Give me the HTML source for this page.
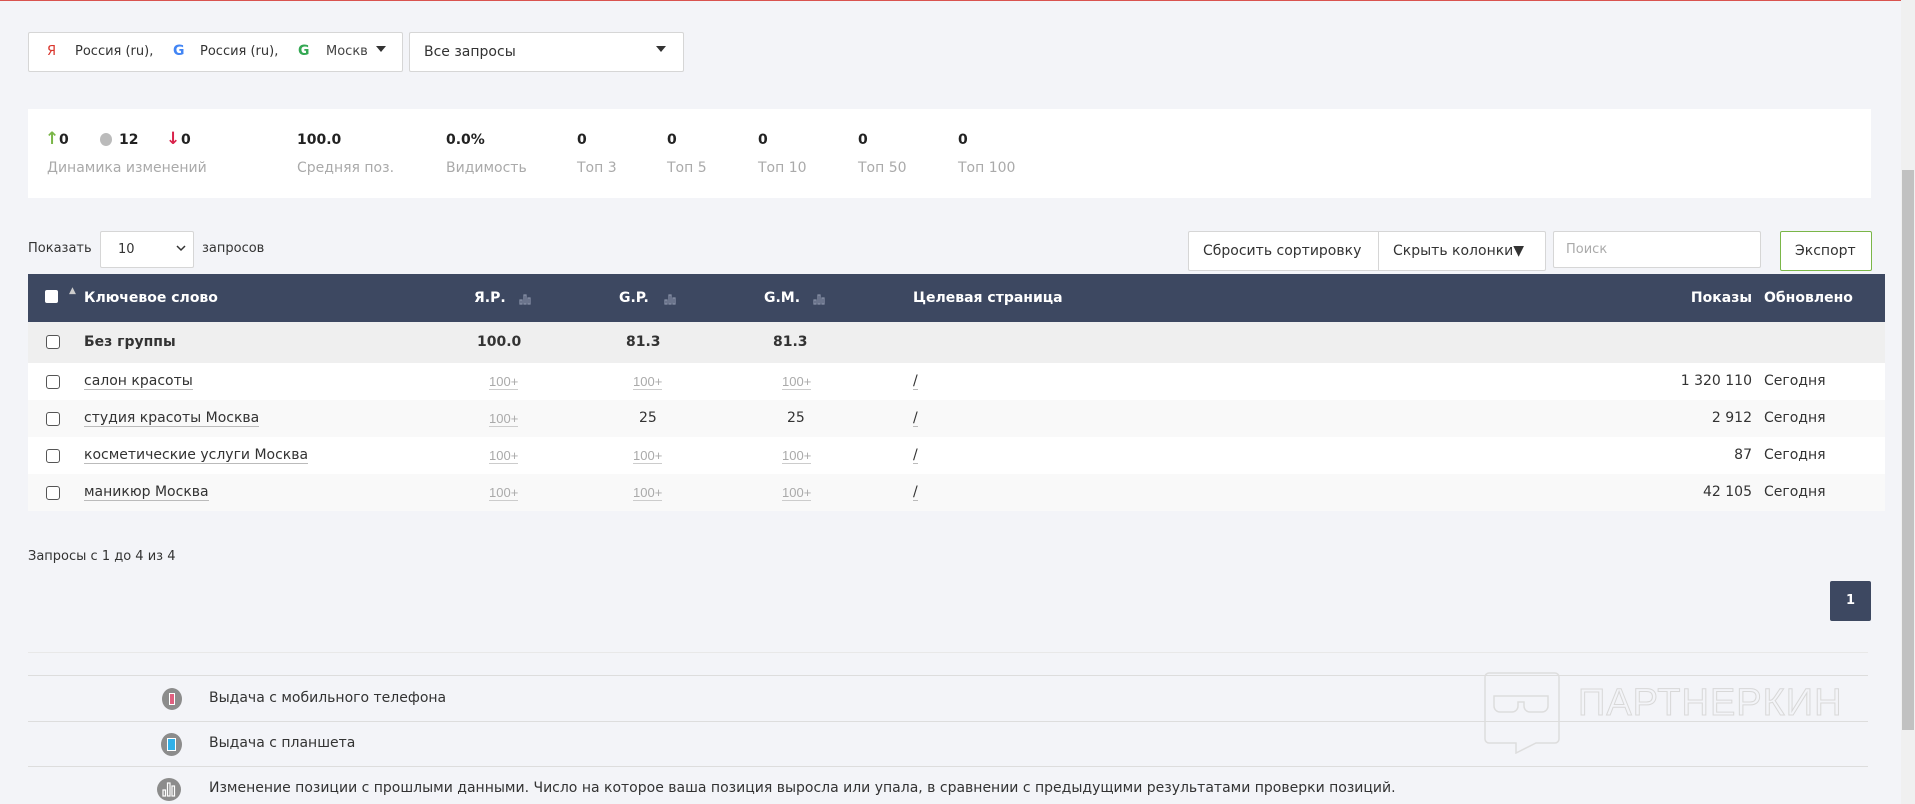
<!DOCTYPE html>
<html><head><meta charset="utf-8"><style>
*{box-sizing:border-box;margin:0;padding:0}
body{width:1915px;height:804px;background:#f3f4f8;font-family:"DejaVu Sans","Liberation Sans",sans-serif;font-size:14px;color:#333;position:relative;overflow:hidden}
.a{position:absolute;white-space:nowrap}
.box{position:absolute;background:#fff;border:1px solid #d6d6d6;border-radius:2px}
.tri{display:inline-block;width:0;height:0;border-left:5px solid transparent;border-right:5px solid transparent;border-top:6px solid #333;vertical-align:middle}
.lbl{color:#aaa;font-size:14px}
.num{font-weight:bold;font-size:14px;color:#222}
.row{position:absolute;left:28px;width:1857px}
.cb{position:absolute;left:18px;width:14px;height:14px;border:1px solid #555;border-radius:3px;background:#fff}
.gray{color:#aaa;border-bottom:1px solid #ccc;font-size:13px;font-family:"Liberation Sans",sans-serif}
.kw{border-bottom:1px solid #bbb}
.hr{position:absolute;left:28px;width:1840px;height:1px;background:#ddd}
</style></head><body>
<div class="a" style="left:0;top:0;width:1915px;height:1px;background:#d9534f"></div>
<div class="box" style="left:28px;top:32px;width:375px;height:40px"></div>
<div class="a" style="left:47px;top:44px;color:#d9342b;font-size:13px">Я</div>
<div class="a" style="left:75px;top:44px;font-size:13px">Россия (ru),</div>
<div class="a" style="left:173px;top:43px;color:#4285f4;font-weight:bold">G</div>
<div class="a" style="left:200px;top:44px;font-size:13px">Россия (ru),</div>
<div class="a" style="left:298px;top:43px;color:#34a853;font-weight:bold">G</div>
<div class="a" style="left:326px;top:44px;color:#444;font-size:13px">Москв</div>
<div class="a" style="left:376px;top:41px"><span class="tri"></span></div>
<div class="box" style="left:409px;top:32px;width:275px;height:40px"></div>
<div class="a" style="left:424px;top:44px">Все запросы</div>
<div class="a" style="left:656px;top:41px"><span class="tri"></span></div>

<div class="a" style="left:28px;top:109px;width:1843px;height:89px;background:#fff"></div>
<div class="a" style="left:45px;top:129px;color:#7ab648;font-weight:bold;font-size:17px">↑</div>
<div class="a num" style="left:59px;top:132px">0</div>
<div class="a" style="left:100px;top:133px;width:12px;height:13px;border-radius:50%;background:#bbb"></div>
<div class="a num" style="left:119px;top:132px">12</div>
<div class="a" style="left:166px;top:129px;color:#d9234b;font-weight:bold;font-size:17px">↓</div>
<div class="a num" style="left:181px;top:132px">0</div>
<div class="a lbl" style="left:47px;top:160px">Динамика изменений</div>
<div class="a num" style="left:297px;top:132px">100.0</div><div class="a lbl" style="left:297px;top:160px">Средняя поз.</div>
<div class="a num" style="left:446px;top:132px">0.0%</div><div class="a lbl" style="left:446px;top:160px">Видимость</div>
<div class="a num" style="left:577px;top:132px">0</div><div class="a lbl" style="left:577px;top:160px">Топ 3</div>
<div class="a num" style="left:667px;top:132px">0</div><div class="a lbl" style="left:667px;top:160px">Топ 5</div>
<div class="a num" style="left:758px;top:132px">0</div><div class="a lbl" style="left:758px;top:160px">Топ 10</div>
<div class="a num" style="left:858px;top:132px">0</div><div class="a lbl" style="left:858px;top:160px">Топ 50</div>
<div class="a num" style="left:958px;top:132px">0</div><div class="a lbl" style="left:958px;top:160px">Топ 100</div>

<div class="a" style="left:28px;top:241px;font-size:13px">Показать</div>
<div class="box" style="left:100px;top:231px;width:94px;height:37px"></div>
<div class="a" style="left:118px;top:242px;font-size:13px">10</div>
<svg class="a" style="left:176px;top:245px" width="10" height="7"><path d="M1 1l4 4 4-4" fill="none" stroke="#333" stroke-width="1.5"/></svg>
<div class="a" style="left:202px;top:241px;font-size:13px">запросов</div>
<div class="box" style="left:1188px;top:231px;width:358px;height:40px"></div>
<div class="a" style="left:1378px;top:232px;width:1px;height:38px;background:#d6d6d6"></div>
<div class="a" style="left:1203px;top:243px;font-size:14px">Сбросить сортировку</div>
<div class="a" style="left:1393px;top:243px;font-size:14px">Скрыть колонки▼</div>
<div class="box" style="left:1553px;top:231px;width:208px;height:37px"></div>
<div class="a" style="left:1566px;top:242px;color:#aaa;font-size:13px">Поиск</div>
<div class="box" style="left:1780px;top:231px;width:92px;height:40px;border-color:#7ab648"></div>
<div class="a" style="left:1795px;top:243px">Экспорт</div>

<div class="row" style="top:274px;height:48px;background:#3d4861;color:#fff;font-weight:bold">
<div class="a" style="left:17px;top:16px;width:13px;height:13px;background:#fff;border-radius:2px"></div>
<div class="a" style="left:41px;top:12px;font-size:9px;color:#ccc">▲</div>
<div class="a" style="left:56px;top:16px">Ключевое слово</div>
<div class="a" style="left:446px;top:16px">Я.Р.</div><svg class="a" style="left:491px;top:19px" width="12" height="12"><g fill="none" stroke="#8a93a8" stroke-width="1.2"><rect x="1" y="7" width="2" height="4"/><rect x="5" y="2" width="2" height="9"/><rect x="9" y="5" width="2" height="6"/></g></svg>
<div class="a" style="left:591px;top:16px">G.P.</div><svg class="a" style="left:636px;top:19px" width="12" height="12"><g fill="none" stroke="#8a93a8" stroke-width="1.2"><rect x="1" y="7" width="2" height="4"/><rect x="5" y="2" width="2" height="9"/><rect x="9" y="5" width="2" height="6"/></g></svg>
<div class="a" style="left:736px;top:16px">G.M.</div><svg class="a" style="left:785px;top:19px" width="12" height="12"><g fill="none" stroke="#8a93a8" stroke-width="1.2"><rect x="1" y="7" width="2" height="4"/><rect x="5" y="2" width="2" height="9"/><rect x="9" y="5" width="2" height="6"/></g></svg>
<div class="a" style="left:885px;top:16px">Целевая страница</div>
<div class="a" style="left:1600px;top:16px;width:124px;text-align:right">Показы</div>
<div class="a" style="left:1736px;top:16px">Обновлено</div>
</div>
<div class="row" style="top:322px;height:41px;background:#efefef;font-weight:bold">
<div class="cb" style="top:13px"></div>
<div class="a" style="left:56px;top:12px">Без группы</div>
<div class="a" style="left:449px;top:12px">100.0</div>
<div class="a" style="left:598px;top:12px">81.3</div>
<div class="a" style="left:745px;top:12px">81.3</div>
</div>
<div class="row" style="top:363px;height:37px;background:#fff">
<div class="cb" style="top:12px"></div><div class="a kw" style="left:56px;top:10px">салон красоты</div>
<div class="a gray" style="left:461px;top:11px">100+</div><div class="a gray" style="left:605px;top:11px">100+</div><div class="a gray" style="left:754px;top:11px">100+</div>
<div class="a kw" style="left:885px;top:10px">/</div>
<div class="a" style="left:1600px;top:10px;width:124px;text-align:right">1 320 110</div><div class="a" style="left:1736px;top:10px">Сегодня</div>
</div>
<div class="row" style="top:400px;height:37px;background:#f9f9f9">
<div class="cb" style="top:12px"></div><div class="a kw" style="left:56px;top:10px">студия красоты Москва</div>
<div class="a gray" style="left:461px;top:11px">100+</div><div class="a" style="left:611px;top:10px">25</div><div class="a" style="left:759px;top:10px">25</div>
<div class="a kw" style="left:885px;top:10px">/</div>
<div class="a" style="left:1600px;top:10px;width:124px;text-align:right">2 912</div><div class="a" style="left:1736px;top:10px">Сегодня</div>
</div>
<div class="row" style="top:437px;height:37px;background:#fff">
<div class="cb" style="top:12px"></div><div class="a kw" style="left:56px;top:10px">косметические услуги Москва</div>
<div class="a gray" style="left:461px;top:11px">100+</div><div class="a gray" style="left:605px;top:11px">100+</div><div class="a gray" style="left:754px;top:11px">100+</div>
<div class="a kw" style="left:885px;top:10px">/</div>
<div class="a" style="left:1600px;top:10px;width:124px;text-align:right">87</div><div class="a" style="left:1736px;top:10px">Сегодня</div>
</div>
<div class="row" style="top:474px;height:37px;background:#f9f9f9">
<div class="cb" style="top:12px"></div><div class="a kw" style="left:56px;top:10px">маникюр Москва</div>
<div class="a gray" style="left:461px;top:11px">100+</div><div class="a gray" style="left:605px;top:11px">100+</div><div class="a gray" style="left:754px;top:11px">100+</div>
<div class="a kw" style="left:885px;top:10px">/</div>
<div class="a" style="left:1600px;top:10px;width:124px;text-align:right">42 105</div><div class="a" style="left:1736px;top:10px">Сегодня</div>
</div>

<div class="a" style="left:28px;top:549px;font-size:13px">Запросы с 1 до 4 из 4</div>
<div class="a" style="left:1830px;top:581px;width:41px;height:40px;background:#3d4861;border-radius:2px;color:#fff;font-weight:bold;font-size:13px;text-align:center;line-height:40px">1</div>

<div class="hr" style="top:652px;background:#e8e8e8"></div>
<div class="hr" style="top:675px"></div>
<div class="hr" style="top:721px"></div>
<div class="hr" style="top:766px"></div>
<div class="a" style="left:162px;top:688px;width:20px;height:22px;border-radius:50%;background:#8c8c8c"></div>
<div class="a" style="left:169px;top:693px;width:6px;height:12px;background:#e06080;border:1px solid #fff"></div>
<div class="a" style="left:209px;top:690px;font-size:14px">Выдача с мобильного телефона</div>
<div class="a" style="left:161px;top:733px;width:21px;height:23px;border-radius:50%;background:#8c8c8c"></div>
<div class="a" style="left:167px;top:738px;width:9px;height:13px;background:#30b0e8;border:1px solid #fff"></div>
<div class="a" style="left:209px;top:735px;font-size:14px">Выдача с планшета</div>
<svg class="a" style="left:157px;top:778px" width="24" height="23"><ellipse cx="12" cy="11.5" rx="12" ry="11.5" fill="#8c8c8c"/><g fill="none" stroke="#fff" stroke-width="1.2"><rect x="6" y="12" width="2.5" height="6"/><rect x="10.5" y="5" width="2.5" height="13"/><rect x="15" y="8" width="2.5" height="10"/></g></svg>
<div class="a" style="left:209px;top:780px;font-size:14px">Изменение позиции с прошлыми данными. Число на которое ваша позиция выросла или упала, в сравнении с предыдущими результатами проверки позиций.</div>

<svg class="a" style="left:1484px;top:670px" width="80" height="84" viewBox="0 0 80 84"><path d="M5 3h66a4 4 0 0 1 4 4v62a4 4 0 0 1-4 4H52l-20 10V73H5a4 4 0 0 1-4-4V7a4 4 0 0 1 4-4z" fill="none" stroke="#ddd" stroke-width="1.5"/><path d="M10 26h54v10a6 6 0 0 1-6 6H46a6 6 0 0 1-6-6v-4h-6v4a6 6 0 0 1-6 6H16a6 6 0 0 1-6-6z" fill="none" stroke="#ddd" stroke-width="1.5"/></svg>
<div class="a" style="left:1578px;top:682px;font-family:'Liberation Sans',sans-serif;font-size:38px;color:transparent;-webkit-text-stroke:1px #d8d8d8;letter-spacing:1px">ПАРТНЕРКИН</div>

<div class="a" style="left:1901px;top:0;width:14px;height:804px;background:#f0f0f0"></div>
<div class="a" style="left:1902px;top:170px;width:12px;height:560px;background:#c1c1c1"></div>
</body></html>
